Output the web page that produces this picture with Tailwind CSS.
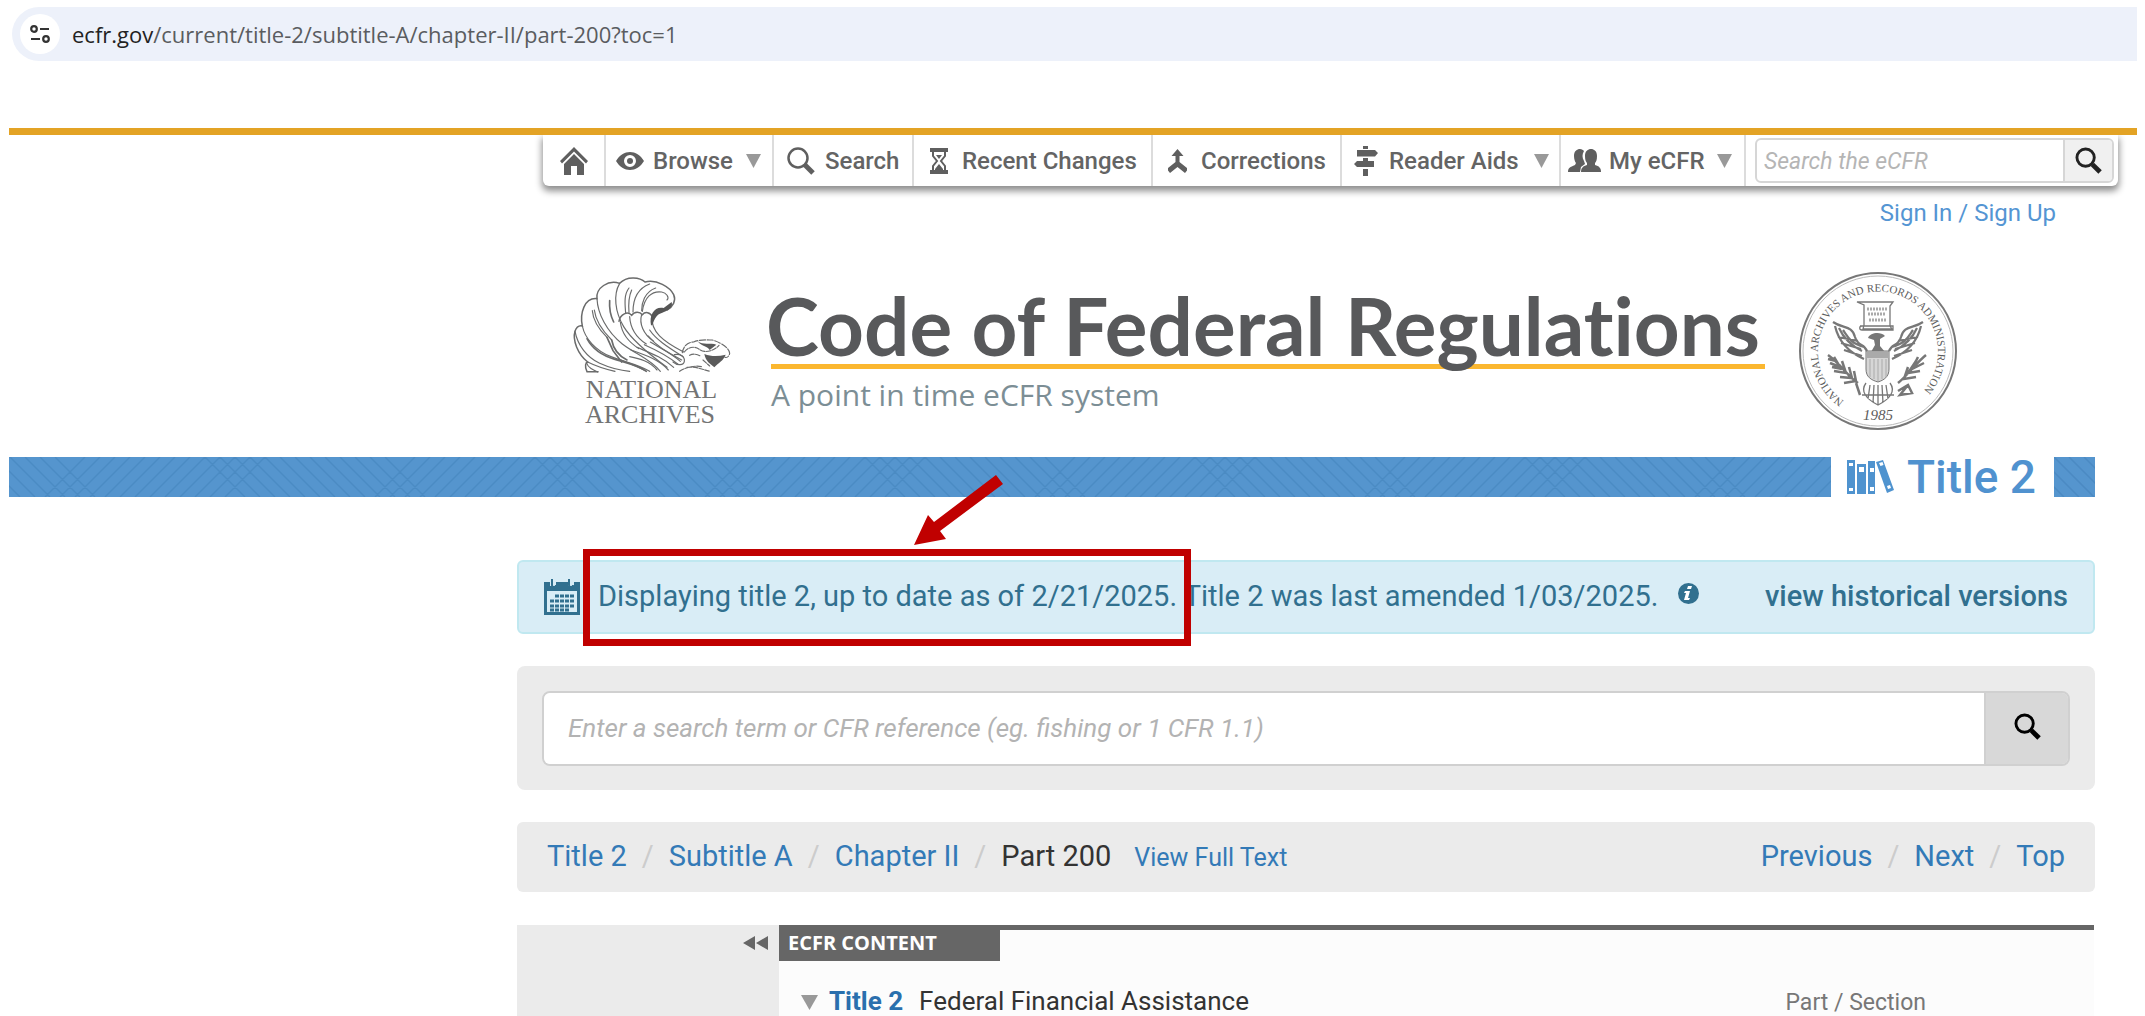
<!DOCTYPE html>
<html lang="en">
  <head>
    <meta charset="UTF-8" />
    <meta name="viewport" content="width=device-width, initial-scale=1.0" />
    <title>eCFR :: 2 CFR Part 200</title>
    <script src="https://cdn.jsdelivr.net/npm/@tailwindcss/browser@4"></script>
  </head>
  <body class="bg-white font-['Roboto',sans-serif] text-[#333] overflow-x-hidden">
    <!-- ADDRESS BAR -->
    <div class="ml-3 mr-2 mt-[7px] h-[54px] pl-2 flex items-center gap-3 rounded-l-full bg-[#edf1fa]">
      <button aria-label="Site information" class="size-10 rounded-full bg-white flex items-center justify-center">
        <svg class="size-5" viewBox="0 0 20 20" fill="none" stroke="#333" stroke-width="2.2">
          <circle cx="4" cy="5" r="2.8" />
          <path d="M10 5h9M1 15h9" />
          <circle cx="16" cy="15" r="2.8" />
        </svg>
      </button>
      <p class="font-['Open_Sans',sans-serif] text-[22px] text-[#5a5c60]"><span class="text-[#222]">ecfr.gov</span>/current/title-2/subtitle-A/chapter-II/part-200?toc=1</p>
    </div>

    <!-- TOP NAV -->
    <div class="ml-[9px] mr-2 mt-[67px] h-[7px] bg-[#e3a325]"></div>
    <nav class="ml-[543px] mr-[27px] h-[51px] grid grid-cols-[63px_168px_140px_239px_189px_219px_185px_minmax(0,1fr)] rounded-b-md bg-white shadow-[0_4px_7px_1px_rgba(0,0,0,0.45)] text-[24px] font-medium text-[#646464] divide-x-2 divide-[#dcdcdc] [clip-path:inset(0_-20px_-20px_-20px)]">
      <a href="#" aria-label="Home" class="flex items-center justify-center">
        <svg class="size-7" viewBox="0 0 28 28" fill="#5f5f5f">
          <path d="M14 0l14 14-2 2.500L14 4.500 2 16.500 0 14z" />
          <path d="M14 7l10 10v11h-7v-9h-6v9H4V17z" />
        </svg>
      </a>
      <a href="#" class="flex items-center gap-[9px] pl-[10px]">
        <svg class="w-7 h-[18px]" viewBox="0 0 28 18" fill="#5f5f5f">
          <path fill-rule="evenodd" d="M0 9C7-3 21-3 28 9 21 21 7 21 0 9zM14 3a6 6 0 100 12 6 6 0 000-12z" />
          <circle cx="14" cy="9" r="3" />
        </svg>
        Browse
        <svg class="ml-1 w-[15px] h-[14px]" viewBox="0 0 15 14" fill="#999"><path d="M0 0h15L7.500 14z" /></svg>
      </a>
      <a href="#" class="flex items-center gap-[10px] pl-[13px]">
        <svg class="size-7" viewBox="0 0 28 28" fill="none" stroke="#5f5f5f">
          <circle cx="11" cy="11" r="9.500" stroke-width="2.500" />
          <path d="M18 18l8 8" stroke-width="5" />
        </svg>
        Search
      </a>
      <a href="#" class="flex items-center gap-[14px] pl-4">
        <svg class="w-[18px] h-[26px]" viewBox="0 0 18 26" fill="#5f5f5f">
          <path d="M0 0h18v4H0zM0 22h18v4H0z" />
          <path d="M3 4v4l4 5-4 5v4M15 4v4l-4 5 4 5v4" fill="none" stroke="#5f5f5f" stroke-width="2" />
          <path d="M6 7h6l-3 4zM9 16l4 5v1H5v-1z" />
        </svg>
        Recent Changes
      </a>
      <a href="#" class="flex items-center gap-[14px] pl-[15px]">
        <svg class="w-[19px] h-[24px]" viewBox="0 0 19 24" fill="#5f5f5f">
          <path d="M9.500 0l6 7h-4v6l7.500 6v2.500L17 24l-7.500-6L2 24l-2-2.500V19l7.500-6V7h-4z" />
        </svg>
        Corrections
      </a>
      <a href="#" class="flex items-center gap-[11px] pl-3">
        <svg class="w-[24px] h-[30px]" viewBox="0 0 24 30" fill="#5f5f5f">
          <path d="M9 0h5v3H9zM3 4h18l3 3-3 3.500H3zM9 12h5v3H9zM3 15h17v6H3l-3-3zM9 23h5v7H9z" />
        </svg>
        Reader Aids
        <svg class="ml-1 w-[15px] h-[14px]" viewBox="0 0 15 14" fill="#999"><path d="M0 0h15L7.500 14z" /></svg>
      </a>
      <a href="#" class="flex items-center gap-2 pl-[7px]">
        <svg class="w-[33px] h-[23px]" viewBox="0 0 33 23" fill="#5f5f5f">
          <path d="M6 7c0-5 3-7 6-7 2 0 3 1 4 2-2 3-2 7 0 10l1 3-4 3-1 5H0c0-4 2-5 7-7l1-2c-1-1-2-4-2-7z" />
          <path d="M17 7c0-5 3-7 6-7s6 2 6 7c0 4-1 6-2 7v2c4 1 6 3 6 7H13c0-4 2-6 6-7v-2c-1-1-2-3-2-7z" />
        </svg>
        My eCFR
        <svg class="ml-1 w-[15px] h-[14px]" viewBox="0 0 15 14" fill="#999"><path d="M0 0h15L7.500 14z" /></svg>
      </a>
      <form class="flex items-center pl-[9px] pr-1">
        <div class="flex w-full h-[45px] rounded-md border-2 border-[#d6d6d6] overflow-hidden">
          <input type="text" aria-label="Search the eCFR" placeholder="Search the eCFR" class="min-w-0 flex-1 pl-[7px] pt-1 text-[23px] italic font-normal placeholder:text-[#b5b5b5] outline-none" />
          <button type="button" aria-label="Search" class="w-[49px] border-l-2 border-[#d6d6d6] bg-[#f0f0f0] flex items-center justify-center">
            <svg class="size-[27px]" viewBox="0 0 28 28" fill="none" stroke="#222">
              <circle cx="11" cy="11" r="9" stroke-width="3" />
              <path d="M18 18l8 8" stroke-width="5" />
            </svg>
          </button>
        </div>
      </form>
    </nav>

    <p class="mt-[11px] mr-[89px] text-right text-[24px] leading-8 text-[#5495d3]"><a href="#">Sign In</a> / <a href="#">Sign Up</a></p>

    <!-- BRANDING -->
    <header class="ml-[572px] mt-[42px] flex items-start">
      <svg class="mt-1 w-[160px] h-[156px] shrink-0" viewBox="67 45 480 468" role="img" aria-label="National Archives">
        <g fill="none" stroke="#6a6b6b" stroke-width="3.500" stroke-linecap="round">
          <path d="M145 335H112C104 318 108 308 114 306C84 282 68 240 76 214C80 202 88 196 98 198C90 160 104 112 142 116C138 84 176 58 210 70C232 46 272 52 286 66C320 56 362 82 372 104C380 122 370 140 352 150" stroke-width="4.500" />
          <path d="M76 214C84 256 112 292 150 310C190 328 214 332 240 334" />
          <path d="M98 198C106 236 138 272 184 290C224 306 262 312 300 334" />
          <path d="M142 116C144 160 170 214 218 252C260 284 300 296 332 334" />
          <path d="M210 70C190 104 196 156 222 200C246 240 300 284 352 322" />
          <path d="M112 236C128 266 160 288 196 298C236 310 270 318 290 334" stroke-width="5" />
          <path d="M128 152C130 180 146 206 172 232M134 150C138 186 160 214 186 240" />
          <path d="M180 122C178 150 184 170 192 186M172 232L190 272L216 306M186 240C190 262 204 286 232 300" stroke-width="5" />
          <path d="M114 306C138 318 160 326 196 334M110 308C116 324 130 330 144 336" />
          <path d="M208 184C212 162 234 152 246 166C254 154 270 154 278 164C286 154 302 156 308 170" stroke-width="4.500" />
          <path d="M212 186C216 220 236 246 268 266M240 170C242 204 256 230 290 252M276 164C268 190 280 222 312 244" />
          <path d="M238 84C222 104 226 134 228 160M246 90C236 112 236 134 238 158M300 72C262 86 250 120 250 156M318 84C284 96 276 130 276 152" />
          <path d="M278 154C284 112 306 92 336 96C350 98 360 112 352 120" />
          <path d="M308 170C302 214 340 244 402 276M300 210C320 240 356 262 400 290M296 228C318 256 348 274 396 300" />
          <path d="M244 270C290 286 330 300 356 330M262 262C300 278 340 292 372 322M284 254C320 270 350 284 384 312M302 246C330 264 360 276 392 304" />
          <path d="M240 290C270 296 300 304 322 330M214 300C240 312 264 318 282 330M374 284C392 280 406 290 404 304C402 316 384 318 370 306" />
          <path d="M398 278C400 262 412 246 432 246C450 238 474 240 488 240C516 248 540 266 540 280C538 290 532 294 526 292" stroke-dasharray="18 5" />
          <path d="M404 276C420 256 440 260 452 270C468 280 494 272 508 256M412 322C440 318 460 330 482 334M390 334C410 320 440 316 456 320M460 300L480 318M420 286C430 280 440 282 452 288" stroke-dasharray="14 4" />
        </g>
        <path d="M304 196C298 162 316 138 342 144L366 126C372 144 350 154 338 158C322 162 314 176 308 196z" fill="#555" />
        <path d="M464 282C484 290 506 290 528 284C522 302 506 308 494 322C482 312 468 304 464 282zM444 244C460 256 482 248 500 254L480 270C474 258 458 262 444 244z" fill="#5a5a5a" />
        <g font-family="Liberation Serif" font-size="78" fill="#737474">
          <text x="108" y="415">NATIONAL</text>
          <text x="106" y="488">ARCHIVES</text>
        </g>
      </svg>
      <div class="ml-[34px]">
        <h1 class="relative z-10 text-[80px] leading-[108px] h-[93px] font-bold text-[#58595b] font-['Lato',sans-serif] whitespace-nowrap [font-variant-ligatures:none]">Code of Federal Regulations</h1>
        <div class="ml-[5px] w-[994px] h-[5px] bg-[#fbb72f]"></div>
        <p class="ml-[5px] mt-[6px] text-[30px] leading-10 text-[#7c8e95] font-['Open_Sans',sans-serif]">A point in time eCFR system</p>
      </div>
      <svg class="ml-[33px] w-[160px] h-[160px] shrink-0" viewBox="0 0 160 160" role="img" aria-label="National Archives and Records Administration seal">
        <defs><path id="ring" d="M46 130A60 60 0 1 1 114 130" /></defs>
        <g fill="none" stroke="#777">
          <circle cx="80" cy="80" r="78" stroke-width="2" />
          <circle cx="80" cy="80" r="75" stroke-width="1" stroke="#bbb" />
        </g>
        <g font-family="Liberation Serif" font-size="11" fill="#5c5c5c">
          <text><textPath href="#ring">NATIONAL ARCHIVES AND RECORDS ADMINISTRATION</textPath></text>
          <text x="80" y="149" font-size="15" font-style="italic" text-anchor="middle">1985</text>
        </g>
        <g fill="none" stroke="#777">
          <path d="M59 31h36l-3 4v20l2 3H65l1-4V34zM62 55h33v4H64c-3 0-3-4 0-4" stroke-width="1.300" />
          <path d="M69 38h20M70 43h18M71 49h17" stroke="#aaa" stroke-width="3" stroke-dasharray="2 1" />
          <path d="M35 51C45 58 54 54 57 66C60 76 66 72 69 80M37 55C40 68 48 80 66 88M41 57C45 66 52 74 64 80M45 59C50 66 52 72 66 76M40 66l20 4M43 72l20 6M46 79l18 6M125 51C115 58 106 54 103 66C100 76 94 72 91 80M123 55C120 68 112 80 94 88M119 57C115 66 108 74 96 80M115 59C110 66 108 72 94 76M120 66l-20 4M117 72l-20 6M114 79l-18 6" stroke-width="2.200" />
          <path d="M30 84C44 94 50 106 60 112M32 92l10 4-6-10M36 100l12 2-4-12M42 106l12 1-3-11M46 112l12-2-2-10M58 112l4 12M30 88l8 2M34 96l10 2M128 84C118 92 110 104 100 112M126 92l-12 6 6-12M122 100l-12 2 8-12M118 106l-12 2 4-12M100 120l10-6 4 8-12 2 8-10" stroke-width="2.500" />
          <path d="M68 112c-6 8 0 16 12 22 12-6 18-14 12-22M72 114l-2 14M76 114l-1 18M80 114v20M84 114l1 18M88 114l2 14M64 124l32 0" stroke-width="1.300" />
        </g>
        <path d="M70 67c2-5 12-7 17-2l-5 3v7l5 6H73l4-7-1-5z" fill="#777" />
        <path d="M68 80h23v18c0 8-5 11-11 13-7-2-12-5-12-13z" fill="#d6d6d6" stroke="#777" />
        <path d="M68 81h23v6H68z" fill="#aaa" />
        <path d="M72 88v18M76 88v20M80 88v22M84 88v20M88 88v18" stroke="#aaa" />
      </svg>
    </header>

    <!-- TITLE BAND -->
    <div class="ml-[9px] mr-[50px] mt-[26px] h-[40px] flex items-center">
      <svg class="h-full min-w-0 flex-1 bg-[#5595ce]" aria-hidden="true">
        <defs>
          <pattern id="weave" width="330" height="40" patternUnits="userSpaceOnUse">
            <path fill="none" stroke="#4583bd" stroke-opacity=".6" stroke-width="1.500" d="M76 0l-40 40M91 0l-40 40M106 0l-40 40M121 0l-40 40M136 0l-40 40M151 0l-40 40M166 0l-40 40M181 0l-40 40M196 0l-40 40M211 0l-40 40M226 0l-40 40M241 0l-40 40M256 0l-40 40M196 0l40 40M211 0l40 40M226 0l40 40M241 0l40 40M256 0l40 40M271 0l40 40M286 0l40 40M301 0l40 40M316 0l40 40M-29 0l40 40M-14 0l40 40M1 0l40 40M16 0l40 40M31 0l40 40M46 0l40 40" />
          </pattern>
        </defs>
        <rect width="100%" height="100%" fill="url(#weave)" />
      </svg>
      <h2 class="w-[223px] flex items-center gap-[13px] pl-4 text-[46px] font-medium leading-10 text-[#5092cf] whitespace-nowrap">
        <svg class="w-[47px] h-[34px]" viewBox="0 0 47 34" fill="#4f93cf">
          <path fill-rule="evenodd" d="M0 0h8v34H0zM2 3v3h4V3zM2 28v3h4v-3zM10 4h9v30h-9zM12 7v5h5V7zM21 1h7v33h-7zM23 8v4h4V8zM23 27v4h4v-4zM29 2l7-2 11 30-7 3zM32 3l1.500 3 3-1-1-3zM40 26l1 3 3-1-1-3z" />
        </svg>
        Title 2
      </h2>
      <svg class="h-full w-[41px] bg-[#5595ce]" aria-hidden="true">
        <path fill="none" stroke="#4583bd" stroke-opacity=".6" stroke-width="1.500" d="M-30 0l40 40M-15 0l40 40M0 0l40 40M15 0l40 40M30 0l40 40" />
      </svg>
    </div>

    <main class="ml-[517px] mr-[50px] mt-[63px]">
      <!-- DATE NOTICE -->
      <section class="relative h-[74px] px-[25px] flex items-center rounded-md border-2 border-[#c0e8f0] bg-[#d9edf6] text-[29px] text-[#31708f] whitespace-nowrap">
        <svg class="w-[36px] h-[36px] shrink-0" viewBox="0 0 36 36">
          <path fill="#31708f" fill-rule="evenodd" d="M0 3h36v33H0zM3 12v21h30V12z" />
          <path fill="none" stroke="#d9edf6" stroke-width="6" d="M9 0v7M27 0v7" />
          <path fill="none" stroke="#31708f" stroke-width="2" d="M8 0v6c0 3 4 3 4 0M25 0v6c0 3 4 3 4 0" />
          <path fill="none" stroke="#31708f" stroke-width="3" stroke-dasharray="4 1" d="M11 17h20M6 22h25M6 27h25M6 31h19" />
        </svg>
        <p class="ml-[18px]">Displaying title 2, up to date as of 2/21/2025. Title 2 was last amended 1/03/2025.</p>
        <svg class="ml-5 mb-2 size-[21px]" viewBox="0 0 21 21">
          <circle cx="10.500" cy="10.500" r="10.500" fill="#31708f" />
          <path fill="#fff" d="M10 3h4l-1 3H9zM7 8h5l-2 7h2l-1 2H6l2-7H6z" />
        </svg>
        <a href="#" class="ml-auto font-medium">view historical versions</a>

        <!-- callout box and arrow -->
        <div class="absolute left-[64px] -top-[13px] w-[608px] h-[97px] border-[7px] border-[#c00000]"></div>
        <svg class="absolute left-[394px] -top-[88px] w-[92px] h-[74px]" viewBox="0 0 92 74" fill="#c00000">
          <path d="M1 71L15 41l6 7L83 1l7 9L27 57l6 8z" />
        </svg>
      </section>

      <!-- SEARCH -->
      <form class="mt-8 h-[124px] px-[25px] flex items-center rounded-lg bg-[#ebebeb]">
        <div class="flex w-full h-[75px] rounded-lg border-2 border-[#d0d0d0] overflow-hidden">
          <input type="text" aria-label="Search term or CFR reference" placeholder="Enter a search term or CFR reference (eg. fishing or 1 CFR 1.1)" class="min-w-0 flex-1 pl-6 bg-white text-[26px] italic placeholder:text-[#b3b3b3] outline-none" />
          <button type="button" aria-label="Search" class="w-[84px] pb-1 border-l-2 border-[#d0d0d0] bg-[#d8d8d8] flex items-center justify-center">
            <svg class="size-[27px]" viewBox="0 0 28 28" fill="none" stroke="#000">
              <circle cx="11" cy="11" r="9" stroke-width="3" />
              <path d="M18 18l8 8" stroke-width="5" />
            </svg>
          </button>
        </div>
      </form>

      <!-- BREADCRUMBS -->
      <nav class="mt-8 h-[70px] px-[30px] flex items-center justify-between rounded-md bg-[#ebebeb] text-[29px] text-[#337ab7] whitespace-nowrap">
        <div class="flex items-baseline gap-[15px]">
          <a href="#">Title 2</a><span class="text-[#ccc]">/</span>
          <a href="#">Subtitle A</a><span class="text-[#ccc]">/</span>
          <a href="#">Chapter II</a><span class="text-[#ccc]">/</span>
          <span class="text-[#333]">Part 200</span>
          <a href="#" class="ml-2 text-[25px]">View Full Text</a>
        </div>
        <div class="flex gap-[15px]">
          <a href="#">Previous</a><span class="text-[#ccc]">/</span>
          <a href="#">Next</a><span class="text-[#ccc]">/</span>
          <a href="#">Top</a>
        </div>
      </nav>

      <!-- CONTENT -->
      <div class="mt-[33px] flex">
        <aside class="w-[262px] h-[91px] bg-[#ebebeb] flex justify-end items-start pt-[11px] pr-[11px]">
          <button aria-label="Collapse sidebar">
            <svg class="w-[25px] h-[14px]" viewBox="0 0 25 14" fill="#666"><path d="M12 0v14L0 7zM25 0v14L13 7z" /></svg>
          </button>
        </aside>
        <section class="mr-px h-[91px] flex-1 border-t-[5px] border-[#666] bg-[#fcfcfc] overflow-hidden">
          <h3 class="w-[221px] h-[31px] pl-[9px] pb-[5px] flex items-center bg-[#666] text-[20px] leading-6 font-bold text-white font-['Open_Sans',sans-serif]">ECFR CONTENT</h3>
          <div class="mt-6 pl-[22px] pr-[168px] flex items-baseline text-[26px] leading-8 whitespace-nowrap">
            <svg class="mr-[11px] w-[17px] h-[15px]" viewBox="0 0 17 15" fill="#999"><path d="M0 0h17L8.500 15z" /></svg>
            <a href="#" class="mr-4 font-bold text-[#2a6fad]">Title 2</a>
            Federal Financial Assistance
            <span class="ml-auto text-[23px] text-[#777]">Part / Section</span>
          </div>
        </section>
      </div>
    </main>
  </body>
</html>
